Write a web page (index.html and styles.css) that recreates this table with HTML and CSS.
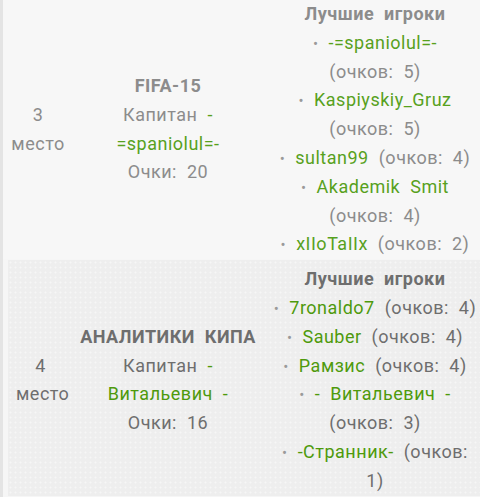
FILE: index.html
```html
<!DOCTYPE html>
<html lang="ru">
<head>
<meta charset="utf-8">
<link rel="stylesheet" href="styles.css">
</head>
<body>
<div class="board">
  <div class="row row-a">
    <div class="place">3 место</div>
    <div class="team">
      <div class="team-name">FIFA-15</div>
      <div>Капитан <span class="nick">-=spaniolul=-</span></div>
      <div>Очки: 20</div>
    </div>
    <div class="best">
      <div class="best-title">Лучшие игроки</div>
      <div><span class="dot">•</span> <span class="nick">-=spaniolul=-</span><br>(очков: 5)</div>
      <div><span class="dot">•</span> <span class="nick">Kaspiyskiy_Gruz</span> (очков: 5)</div>
      <div><span class="dot">•</span> <span class="nick">sultan99</span> (очков: 4)</div>
      <div><span class="dot">•</span> <span class="nick">Akademik Smit</span> (очков: 4)</div>
      <div><span class="dot">•</span> <span class="nick">xIIoTaIIx</span> (очков: 2)</div>
    </div>
  </div>
  <div class="row row-b">
    <div class="place">4 место</div>
    <div class="team">
      <div class="team-name">АНАЛИТИКИ КИПА</div>
      <div>Капитан <span class="nick">- Витальевич -</span></div>
      <div>Очки: 16</div>
    </div>
    <div class="best">
      <div class="best-title">Лучшие игроки</div>
      <div><span class="dot">•</span> <span class="nick">7ronaldo7</span> (очков: 4)</div>
      <div><span class="dot">•</span> <span class="nick">Sauber</span> (очков: 4)</div>
      <div><span class="dot">•</span> <span class="nick">Рамзис</span> (очков: 4)</div>
      <div><span class="dot">•</span> <span class="nick">- Витальевич -</span> (очков: 3)</div>
      <div><span class="dot">•</span> <span class="nick">-Странник-</span> (очков: 1)</div>
    </div>
  </div>
</div>
</body>
</html>
```
FILE: styles.css
```css
html, body {
  margin: 0;
  padding: 0;
}
body {
  background: #f6f6f6;
  font-family: Roboto, "Noto Sans", sans-serif;
  font-size: 18px;
  line-height: 28.8px;
  letter-spacing: 0.5px;
  word-spacing: 5px;
  overflow: hidden;
}
.board {
  border-left: 3px solid #e4e4e4;
  min-height: 497px;
  box-sizing: border-box;
}
.row {
  display: grid;
  grid-template-columns: 70px 190px 1fr;
  text-align: center;
  align-items: center;
}
.row-a {
  background: #f7f7f7;
  color: #8c8c8c;
}
.row-a .nick { color: #57a11d; }
.row-b {
  margin-top: 1px;
  border-left: 5px solid #f6f6f6;
  grid-template-columns: 65px 190px 1fr;
  padding-top: 5px;
  background-color: #eeeeee;
  background-image: radial-gradient(circle, #f6f6f6 0.8px, transparent 1.2px);
  background-size: 5px 5px;
  color: #6e6e6e;
}
.row-b .nick { color: #4e9a0c; }
.place {
  padding: 0 8px;
}
.team-name, .best-title {
  font-weight: bold;
}
.best {
  padding: 0 3px 0 10px;
}
.dot {
  font-size: 15px;
  line-height: 0;
  color: #9a9a9a;
}
```
